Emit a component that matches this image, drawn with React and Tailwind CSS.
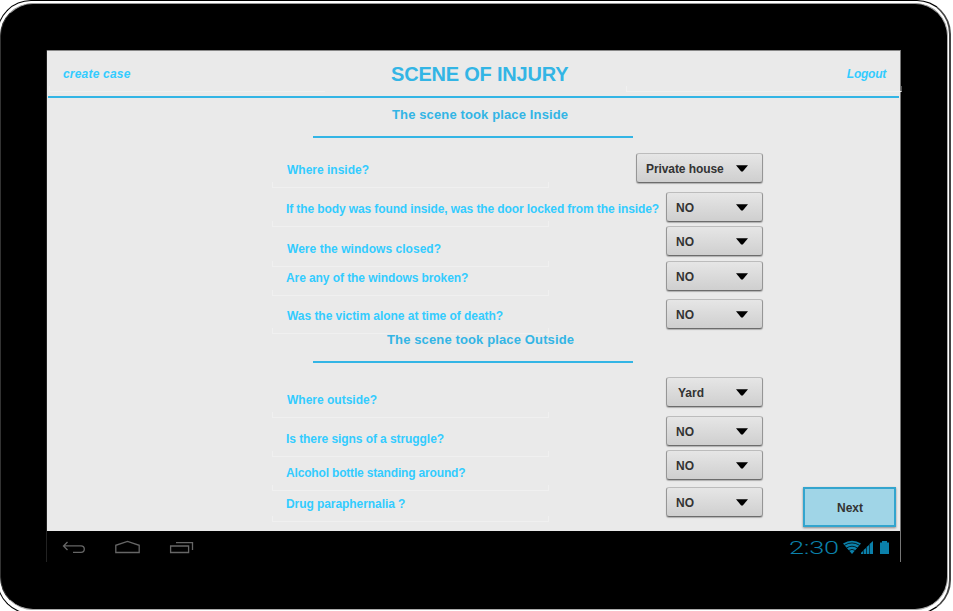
const inside = [
  { q: 'Where inside?', a: 'Private house', row: 'h-[39px]', label: 'mt-[9px] pl-[15px]', wide: true },
  { q: 'If the body was found inside, was the door locked from the inside?', a: 'NO', row: 'h-[34px]', label: 'mt-[9px] pl-[14px] tracking-[-0.107px]' },
  { q: 'Were the windows closed?', a: 'NO', row: 'h-[35px]', label: 'mt-[15px] pl-[15px] tracking-[0.04px]' },
  { q: 'Are any of the windows broken?', a: 'NO', row: 'h-[38px]', label: 'mt-[9px] pl-[14px] tracking-[-0.08px]' },
  { q: 'Was the victim alone at time of death?', a: 'NO', row: 'h-[32px]', label: 'mt-[9px] pl-[15px] tracking-[-0.04px]' },
];

const outside = [
  { q: 'Where outside?', a: 'Yard', row: 'h-[39px]', label: 'mt-[15px] pl-[15px]' },
  { q: 'Is there signs of a struggle?', a: 'NO', row: 'h-[34px]', label: 'mt-[15px] pl-[14px] tracking-[-0.07px]' },
  { q: 'Alcohol bottle standing around?', a: 'NO', row: 'h-[37px]', label: 'mt-[15px] pl-[14px] tracking-[-0.17px]' },
  { q: 'Drug paraphernalia ?', a: 'NO', row: 'h-[44px]', label: 'mt-[9px] pl-[14px] tracking-[-0.07px]' },
];

function Select({ value, wide }) {
  return (
    <button
      className={`flex h-[30px] shrink-0 items-center justify-between rounded-[3px] border border-t-[#bcbcbc] border-r-[#969696] border-b-[#6c6c6c] border-l-[#969696] bg-linear-to-b from-[#e6e6e6] to-[#cfcfcf] pr-[14px] text-[12px] font-bold text-[#333] shadow-[0_1px_1px_rgba(0,0,0,0.25)] ${wide ? 'w-[127px] tracking-[-0.08px]' : 'w-[97px]'} ${value === 'Yard' ? 'pl-[11px]' : 'pl-[9px]'}`}
    >
      <span className="pt-[2px] whitespace-nowrap">{value}</span>
      <svg width="12" height="7" viewBox="0 0 12 7" className="mt-px">
        <path d="M0 0.3H12L6.8 6.5H5.2Z" fill="#000" />
      </svg>
    </button>
  );
}

function Question({ item }) {
  return (
    <div className={`ml-[225px] flex w-[491px] items-start justify-between ${item.row}`}>
      <div className={`relative flex h-[26px] w-[277px] shrink-0 flex-col justify-between ${item.label}`}>
        <span className="text-[12px] leading-4 font-bold whitespace-nowrap text-[#33ccff]">{item.q}</span>
        <span className="absolute bottom-0 left-0 h-[6px] w-full border-x border-b border-[#f0f0f0]" />
      </div>
      <Select value={item.a} wide={item.wide} />
    </div>
  );
}

function SectionTitle({ children, text }) {
  return (
    <div className="ml-[266px] flex w-[320px] flex-col">
      <h2 className={`pt-px text-[13px] leading-4 font-bold tracking-[0.13px] whitespace-nowrap text-[#33b5e5] ${text}`}>{children}</h2>
      <div className="mt-[13px] h-[2px] bg-[#33b5e5]" />
    </div>
  );
}

function NavBar() {
  return (
    <footer className="flex h-[31px] items-start justify-between bg-black">
      <svg width="150" height="31" viewBox="47 531 150 31" fill="none" stroke="#666" strokeWidth="1.3">
        <path d="M67.5 542L63.5 546L67.5 550M64 545.8H81Q84.3 546 84.3 549Q84.3 552.4 81 552.4H73" />
        <path d="M115.8 552.5V545.3L127.5 541.5L139.2 545.3V552.5Z" />
        <path d="M170.6 546H188.6V552.5H170.6ZM176 542.6H192.5V550" />
      </svg>
      <div className="flex h-[31px] items-start pr-[11px] text-[#0b80aa]">
        <span className="mt-[5px] mr-[4px] flex h-[24px] w-[50px] items-center">
          <span className="origin-left scale-x-[1.43] font-['Roboto'] text-[19px] leading-6 font-light tracking-[-0.2px]">2:30</span>
        </span>
        <svg width="46" height="31" viewBox="843 531 46 31">
          <path d="M843 543.4Q852 538.3 861 543.4L852 554Z" fill="#0b80aa" />
          <g fill="none" stroke="#000" strokeWidth="0.8">
            <path d="M844.4 545.3Q852 540.6 859.6 545.3" />
            <path d="M846.5 548Q852 544.4 857.5 548" />
            <path d="M848.5 550.6Q852 548.2 855.5 550.6" />
          </g>
          <path d="M861 554V552.7L863 551V554ZM863.6 554V550L866 548V554ZM866.6 554V547L869 545V554ZM869.6 554V544L873 541V554Z" fill="#0b80aa" />
          <path d="M880 542.5H882V541H887V542.5H889V554H880Z" fill="#0b80aa" />
        </svg>
      </div>
    </footer>
  );
}

export default function App() {
  return (
    <div className="relative h-[611px] w-[953px] overflow-hidden bg-white font-['Liberation_Sans',Arial,sans-serif]">
      <div className="absolute top-0 -left-[3px] h-[614px] w-[954px] rounded-[34px] border border-r-2 border-black border-r-[#444]" />
      <div className="relative mt-[3px] h-[607px] w-[948px] rounded-[33px] border border-t-[#999] border-r-[#aaa] border-b-[#aaa] border-l-[#333] bg-black pt-[46px] pl-[45px]">
        <div className="w-[855px] border-r border-l border-r-[#777] border-l-[#222]">
          <main className="flex h-[481px] flex-col border-t border-t-[#888] bg-[#eaeaea]">
            <header className="relative flex h-[45px] shrink-0 items-center pr-[14px] pl-[16px] text-[12px] font-bold text-[#33ccff]">
              <span className="w-[328px] tracking-[0.2px] italic">create case</span>
              <h1 className="flex-1 text-[20px] leading-6 tracking-[-0.2px] whitespace-nowrap text-[#33b5e5]">SCENE OF INJURY</h1>
              <span className="tracking-[-0.25px] italic">Logout</span>
              <span className="absolute bottom-[4px] left-[2px] h-[6px] w-[276px] border-b border-l border-[#f0f0f0]" />
              <span className="absolute -right-[2px] bottom-[4px] h-[6px] w-[276px] border-x border-b border-[#f0f0f0] border-r-[#555]" />
            </header>
            <div className="mx-px h-[2px] shrink-0 bg-[#33b5e5]" />
            <div className="h-[8px] shrink-0" />
            <SectionTitle text="pl-[79px]">The scene took place Inside</SectionTitle>
            <div className="mt-[15px]">
              {inside.map((item) => <Question key={item.q} item={item} />)}
            </div>
            <SectionTitle text="pl-[74px]">The scene took place Outside</SectionTitle>
            <div className="mt-[14px] flex items-end">
              <div className="shrink-0">
                {outside.map((item) => <Question key={item.q} item={item} />)}
              </div>
              <button className="mb-[4px] ml-[40px] h-[40px] w-[93px] shrink-0 border-2 border-[#33a5ce] bg-[#a0d5e7] pt-[2px] pl-px text-[12px] font-bold text-[#333] shadow-[0_1px_2px_rgba(0,0,0,0.4)]">Next</button>
            </div>
          </main>
          <NavBar />
        </div>
      </div>
    </div>
  );
}
